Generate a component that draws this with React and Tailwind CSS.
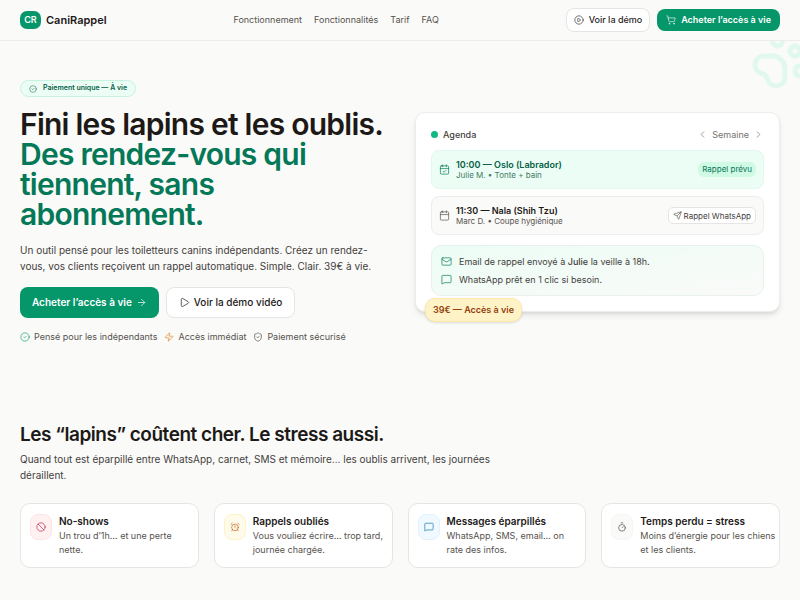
import React from "react";
import {
  AlarmClock,
  ArrowRight,
  Ban,
  Calendar,
  CalendarCheck,
  ChevronLeft,
  ChevronRight,
  CircleCheck,
  CirclePlay,
  Mail,
  MessageSquare,
  PawPrint,
  Play,
  Send,
  ShieldCheck,
  ShoppingCart,
  Timer,
  Zap,
} from "lucide-react";

const navLinks = [
  { label: "Fonctionnement", href: "#fonctionnement" },
  { label: "Fonctionnalités", href: "#fonctionnalites" },
  { label: "Tarif", href: "#tarif" },
  { label: "FAQ", href: "#faq" },
];

const problems = [
  {
    title: "No-shows",
    text: "Un trou d’1h… et une perte nette.",
    icon: Ban,
    tone: "bg-[#fff1f2] border-[#ffe4e6] text-[#be123c]",
  },
  {
    title: "Rappels oubliés",
    text: "Vous vouliez écrire… trop tard, journée chargée.",
    icon: AlarmClock,
    tone: "bg-[#fffbeb] border-[#fef3c7] text-[#b45309]",
  },
  {
    title: "Messages éparpillés",
    text: "WhatsApp, SMS, email… on rate des infos.",
    icon: MessageSquare,
    tone: "bg-[#f0f9ff] border-[#e0f2fe] text-[#0369a1]",
  },
  {
    title: "Temps perdu = stress",
    text: "Moins d’énergie pour les chiens et les clients.",
    icon: Timer,
    tone: "bg-[#fafaf9] border-[#f5f5f4] text-[#44403c]",
  },
];

function Header() {
  return (
    <header className="relative z-10 border-b border-[#eeedec] bg-[#fafaf9]">
      <div className="flex h-10 items-center justify-between px-5">
        <a href="#top" className="flex items-center gap-[5px]">
          <span className="flex h-[18px] w-[21px] items-center justify-center rounded-[7px] bg-[#059669] text-[9px] font-semibold text-white">
            CR
          </span>
          <span className="text-[11px] font-semibold">CaniRappel</span>
        </a>
        <nav className="flex items-center gap-3 text-[9px] text-[#57534e]">
          {navLinks.map((link) => (
            <a key={link.label} href={link.href}>
              {link.label}
            </a>
          ))}
        </nav>
        <div className="flex items-center gap-[7px]">
          <button
            type="button"
            className="flex h-6 items-center gap-[5px] rounded-[8px] border border-[#e7e5e4] bg-white px-[7px] text-[9px] font-medium text-[#292524]"
          >
            <CirclePlay size={10} strokeWidth={1.5} />
            Voir la démo
          </button>
          <button
            type="button"
            className="flex h-[22px] items-center gap-[5px] rounded-[8px] bg-[#059669] px-[9px] text-[9px] font-semibold text-white"
          >
            <ShoppingCart size={10} strokeWidth={1.5} />
            Acheter l’accès à vie
          </button>
        </div>
      </div>
    </header>
  );
}

function AgendaCard() {
  return (
    <div className="relative">
      <div className="rounded-[10px] border border-[#eeedec] bg-white p-[15px] shadow-md">
        <div className="mb-[9px] flex h-[13px] items-center justify-between text-[9px]">
          <div className="flex items-center gap-[5px] font-medium text-[#44403c]">
            <span className="size-[7px] rounded-full bg-[#10b981]" />
            Agenda
          </div>
          <div className="flex items-center gap-1 text-[#78716c]">
            <button type="button" aria-label="Semaine précédente">
              <ChevronLeft size={11} strokeWidth={1.5} />
            </button>
            Semaine
            <button type="button" aria-label="Semaine suivante">
              <ChevronRight size={11} strokeWidth={1.5} />
            </button>
          </div>
        </div>

        <div className="flex h-[39px] items-center gap-1.5 rounded-[8px] border border-[#e0f8ed] bg-[#ecfdf5] px-[7px]">
          <CalendarCheck size={11} strokeWidth={1.5} className="text-[#047857]" />
          <div className="flex-1">
            <p className="text-[9px] leading-[11px] font-semibold text-[#065f46]">10:00 — Oslo (Labrador)</p>
            <p className="text-[8px] leading-[10px] text-[#3f7a67]">Julie M. • Tonte + bain</p>
          </div>
          <span className="rounded-[6px] bg-[#d1fae5] px-1 text-[8px] leading-[15px] text-[#047857]">
            Rappel prévu
          </span>
        </div>

        <div className="mt-[7px] flex h-[39px] items-center gap-1.5 rounded-[8px] border border-[#eeedec] bg-[#fafaf9] px-[7px]">
          <Calendar size={11} strokeWidth={1.5} className="text-[#57534e]" />
          <div className="flex-1">
            <p className="text-[9px] leading-[11px] font-semibold">11:30 — Nala (Shih Tzu)</p>
            <p className="text-[8px] leading-[10px] text-[#57534e]">Marc D. • Coupe hygiénique</p>
          </div>
          <button
            type="button"
            className="flex h-[17px] items-center gap-0.5 rounded-[5px] border border-[#e7e5e4] bg-white px-1 text-[8px] text-[#44403c]"
          >
            <Send size={9} strokeWidth={1.5} />
            Rappel WhatsApp
          </button>
        </div>

        <div className="mt-2.5 flex h-[51px] flex-col justify-center gap-1 rounded-[10px] border border-[#e9f1ec] bg-linear-to-br from-[#ecfdf5] to-[#fafaf9] px-[9px] text-[9px] leading-[14px] text-[#44403c]">
          <p className="flex items-center gap-[7px]">
            <Mail size={11} strokeWidth={1.5} className="text-[#047857]" />
            <span>
              Email de rappel envoyé à <span className="font-medium">Julie</span> la veille à 18h.
            </span>
          </p>
          <p className="flex items-center gap-[7px]">
            <MessageSquare size={11} strokeWidth={1.5} className="text-[#047857]" />
            WhatsApp prêt en 1 clic si besoin.
          </p>
        </div>
      </div>
      <span className="absolute -bottom-2.5 left-2.5 rounded-[10px] border border-[#fde9a9] bg-[#fef3c7] px-[7px] text-[9px] leading-[22px] font-semibold text-[#92400e] shadow-sm">
        39€ — Accès à vie
      </span>
    </div>
  );
}

function Hero() {
  return (
    <section className="relative">
      <PawPrint size={60} className="absolute -top-2.5 -right-2.5 text-[#e0f8ed]" />
      <div className="relative grid grid-cols-2 items-center gap-[30px] px-5 pt-[39px] pb-20">
        <div>
          <p className="flex h-[17px] w-fit items-center gap-1.5 rounded-full border border-[#c5f3dd] bg-[#ecfdf5] px-2 text-[7px] font-semibold text-[#065f46]">
            <CircleCheck size={8} strokeWidth={1.5} />
            Paiement unique — À vie
          </p>
          <h1 className="mt-3 text-[30px] leading-[30px] font-semibold tracking-tight">
            Fini les lapins et les oublis.
            <span className="block text-[#047857]">Des rendez-vous qui tiennent, sans abonnement.</span>
          </h1>
          <p className="mt-[13px] text-[10px] leading-4 text-[#44403c]">
            Un outil pensé pour les toiletteurs canins indépendants. Créez un rendez-vous, vos clients reçoivent un
            rappel automatique. Simple. Clair. 39€ à vie.
          </p>
          <div className="mt-[13px] flex gap-[7px]">
            <button
              type="button"
              className="flex h-[31px] items-center gap-1 rounded-[8px] bg-[#059669] px-3 text-[10px] font-semibold text-white"
            >
              Acheter l’accès à vie
              <ArrowRight size={11} strokeWidth={1.5} />
            </button>
            <button
              type="button"
              className="flex h-[31px] items-center gap-1 rounded-[8px] border border-[#e7e5e4] bg-white px-3 text-[10px] font-medium text-[#1c1917]"
            >
              <Play size={11} strokeWidth={1.5} />
              Voir la démo vidéo
            </button>
          </div>
          <ul className="mt-3 flex items-center gap-[7px] text-[9px] leading-[14px] text-[#57534e]">
            <li className="flex items-center gap-1">
              <CircleCheck size={10} strokeWidth={1.5} className="text-[#059669]" />
              Pensé pour les indépendants
            </li>
            <li className="flex items-center gap-1">
              <Zap size={10} strokeWidth={1.5} className="text-[#d97706]" />
              Accès immédiat
            </li>
            <li className="flex items-center gap-1">
              <ShieldCheck size={10} strokeWidth={1.5} className="text-[#44403c]" />
              Paiement sécurisé
            </li>
          </ul>
        </div>
        <AgendaCard />
      </div>
    </section>
  );
}

function Problems() {
  return (
    <section className="px-5 pb-8">
      <h2 className="text-[19px] leading-[22px] font-semibold tracking-tight">
        Les “lapins” coûtent cher. Le stress aussi.
      </h2>
      <p className="mt-[5px] max-w-[480px] text-[10px] leading-4 text-[#44403c]">
        Quand tout est éparpillé entre WhatsApp, carnet, SMS et mémoire… les oublis arrivent, les journées déraillent.
      </p>
      <div className="mt-5 grid grid-cols-4 gap-[15px]">
        {problems.map(({ title, text, icon: Icon, tone }) => (
          <article
            key={title}
            className="flex items-start gap-[7px] rounded-[10px] border border-[#e7e5e4] bg-white py-2.5 pr-[3px] pl-[9px]"
          >
            <span className={`flex h-[26px] w-[22px] shrink-0 items-center justify-center rounded-[8px] border ${tone}`}>
              <Icon size={10} strokeWidth={1.5} />
            </span>
            <div>
              <h3 className="text-[10px] leading-[15px] font-semibold">{title}</h3>
              <p className="text-[9px] leading-[14px] text-[#57534e]">{text}</p>
            </div>
          </article>
        ))}
      </div>
    </section>
  );
}

export default function App() {
  return (
    <div
      id="top"
      className="min-h-screen overflow-hidden bg-[#fafaf9] font-['Inter','Liberation_Sans',sans-serif] text-[#1c1917]"
    >
      <Header />
      <main>
        <Hero />
        <Problems />
      </main>
    </div>
  );
}
